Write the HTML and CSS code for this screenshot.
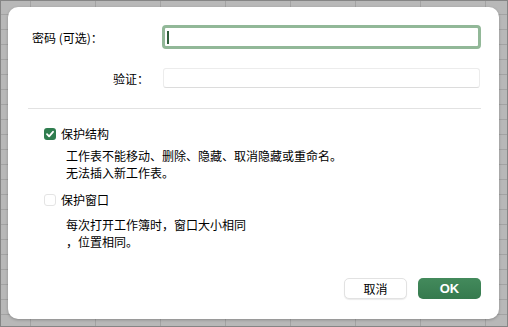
FILE: index.html
```html
<!DOCTYPE html>
<html lang="zh-CN">
<head>
  <meta charset="UTF-8">
  <meta name="viewport" content="width=device-width, initial-scale=1.0">
  <title>保护工作簿</title>
  <link rel="stylesheet" href="styles.css">
</head>
<body>
  <div class="hoja">
    <div class="dialogo">
      <div class="fila fila-clave">
        <span class="etiqueta">密码 (可选)：</span>
        <div class="campo activo"><span class="cursor"></span></div>
      </div>
      <div class="fila fila-verificar">
        <span class="etiqueta derecha">验证：</span>
        <div class="campo"></div>
      </div>

      <div class="separador"></div>

      <div class="opcion">
        <span class="casilla marcada">
          <svg viewBox="0 0 12 12" width="12" height="12"><path d="M3 6.2 L5.1 8.3 L9 3.8" fill="none" stroke="#fff" stroke-width="1.8" stroke-linecap="round" stroke-linejoin="round"/></svg>
        </span>
        <span>保护结构</span>
      </div>
      <p class="detalle">工作表不能移动、删除、隐藏、取消隐藏或重命名。<br>无法插入新工作表。</p>

      <div class="opcion opcion-ventana">
        <span class="casilla"></span>
        <span>保护窗口</span>
      </div>
      <p class="detalle detalle-ventana">每次打开工作簿时，窗口大小相同<br>，位置相同。</p>

      <div class="botones">
        <button class="boton cancelar">取消</button>
        <button class="boton aceptar">OK</button>
      </div>
    </div>
  </div>
</body>
</html>
```

FILE: styles.css
```css
body {
  margin: 0;
  padding: 0;
  font-family: "Noto Sans CJK SC", "Noto Sans", sans-serif;
  font-size: 12px;
  color: #000;
}

.hoja {
  box-sizing: border-box;
  width: 508px;
  height: 327px;
  border: 1px solid #858585;
  padding: 6px 8px 7px 7px;
  background-color: #b8b8b8;
  background-image:
    linear-gradient(to right, #a3a3a3 1px, transparent 1px),
    linear-gradient(to bottom, #a3a3a3 1px, transparent 1px);
  background-size: 65px 100%, 100% 15px;
  background-position: 29px 0, 0 13px;
}

.dialogo {
  box-sizing: border-box;
  height: 100%;
  background: #fff;
  border-radius: 10px;
  box-shadow: 0 1px 3px rgba(0, 0, 0, 0.25);
  padding: 18px 18px 20px 24px;
  display: flex;
  flex-direction: column;
}

.fila {
  display: flex;
  align-items: center;
}

.etiqueta {
  width: 130px;
  line-height: 17px;
}

.derecha {
  width: 117px;
  text-align: right;
  margin-right: 14px;
}

.campo {
  box-sizing: border-box;
  width: 317px;
  height: 20px;
  border: 1px solid #ececec;
  border-bottom-color: #dcdcdc;
  border-radius: 3px;
}

.activo {
  width: 319px;
  height: 24px;
  border: 3px solid #92b898;
  border-radius: 4px;
  display: flex;
  align-items: center;
  padding-left: 2px;
}

.cursor {
  width: 2px;
  height: 13px;
  background: #2f5f3b;
}

.fila-verificar {
  margin-top: 19px;
}

.separador {
  height: 1px;
  background: #e2e2e2;
  margin: 20px 0 0 -4px;
  width: 453px;
}

.opcion {
  display: flex;
  align-items: center;
  gap: 5px;
  margin: 16px 0 0 12px;
  line-height: 17px;
}

.opcion-ventana {
  margin-top: 10px;
}

.casilla {
  box-sizing: border-box;
  width: 12px;
  height: 12px;
  border-radius: 3px;
  border: 1px solid #e4e4e4;
  background: #fff;
  display: flex;
}

.marcada {
  border: none;
  background: #2f7d4f;
}

.detalle {
  margin: 5px 0 0 34px;
  line-height: 17px;
}

.detalle-ventana {
  margin-top: 8px;
}

.botones {
  margin-top: auto;
  display: flex;
  justify-content: flex-end;
  gap: 11px;
}

.boton {
  width: 63px;
  height: 21px;
  border-radius: 5px;
  font-family: "Noto Sans CJK SC", "Noto Sans", sans-serif;
  font-size: 12px;
  padding: 0;
}

.cancelar {
  background: #fff;
  color: #000;
  border: 1px solid #e2e2e2;
  box-shadow: 0 1px 1px rgba(0, 0, 0, 0.08);
}

.aceptar {
  background: linear-gradient(#438a5c, #367a4e);
  color: #fff;
  border: none;
  font-family: "Liberation Sans", Arial, sans-serif;
  font-weight: bold;
  font-size: 13px;
}
```
